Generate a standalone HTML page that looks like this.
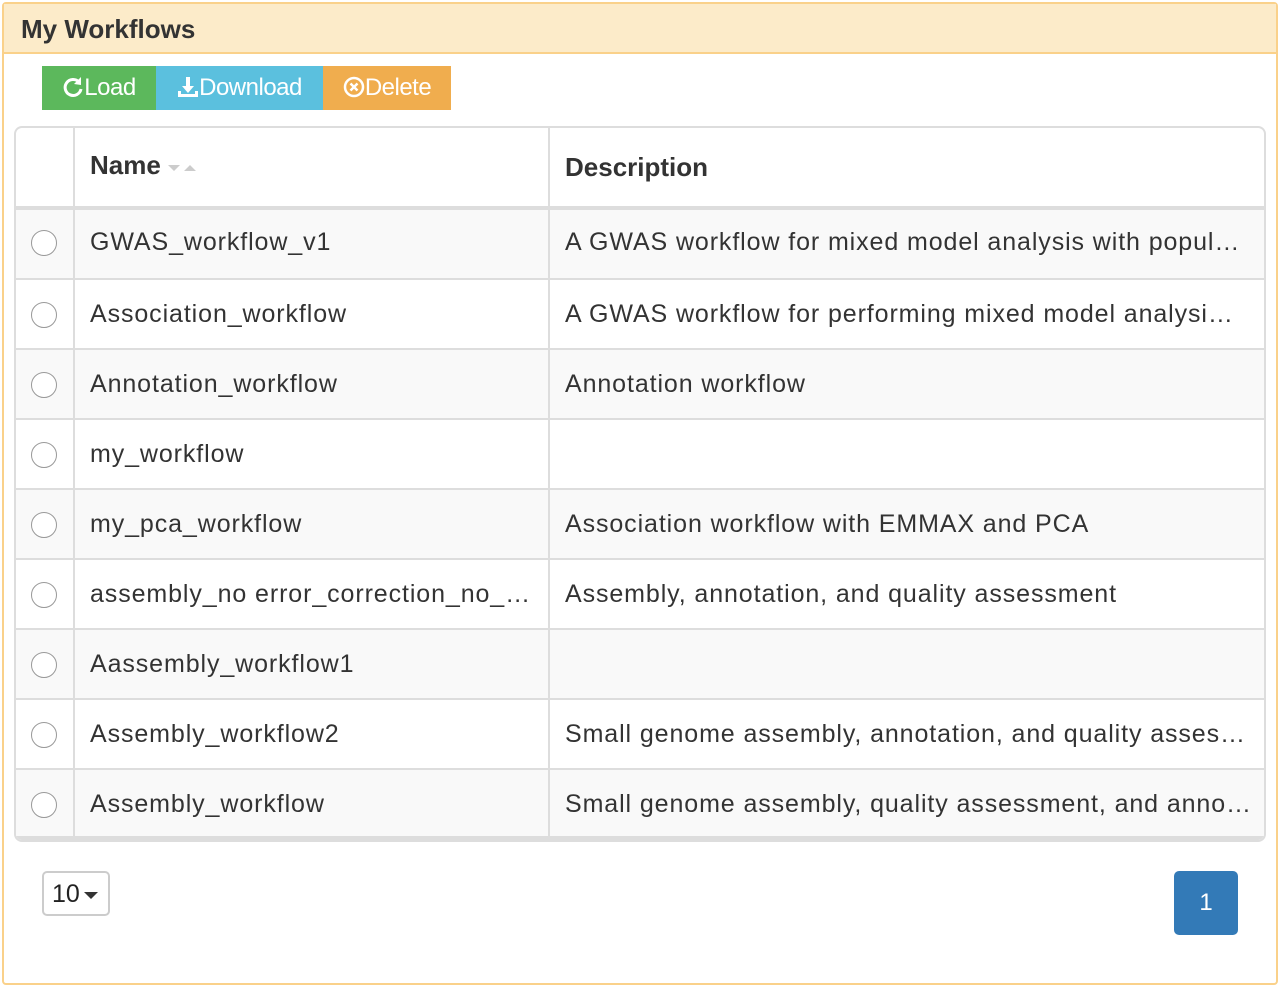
<!DOCTYPE html>
<html><head><meta charset="utf-8"><style>
*{box-sizing:border-box}
body{margin:0;width:1280px;height:986px;background:#fff;font-family:"Liberation Sans",Arial,sans-serif;color:#333;position:relative;overflow:hidden}
.panel{position:absolute;left:2px;top:2px;width:1276px;height:983px;border:2px solid #fad18a;border-radius:4px}
.head{position:absolute;left:0;top:0;right:0;height:50px;background:#fcebc9;border-bottom:2px solid #fad18a;font-weight:bold;font-size:26px;padding:10px 0 0 17px;color:#333}
.btn{position:absolute;top:62px;height:44px;color:#fff;font-size:24px;line-height:44px;text-align:center;letter-spacing:-0.5px}
.tbl{position:absolute;left:10px;top:122px;width:1252px;height:716px;border:2px solid #ddd;border-radius:8px;overflow:hidden}
.row{position:absolute;left:0;right:0;height:70px;border-top:2px solid #ddd;font-size:25px;letter-spacing:0.9px}
.row span{position:absolute;top:20px;white-space:nowrap}
.vl{position:absolute;top:0;bottom:0;width:2px;background:#ddd}
.rad{position:absolute;left:15px;top:22px;width:26px;height:26px;border:1.5px solid #999;border-radius:50%;background:#fff}
</style></head><body>
<div class="panel">
<div class="head">My Workflows</div>
<div class="btn" style="left:38px;width:114px;background:#5cb85c">
<svg width="22" height="22" viewBox="0 0 22 22" style="vertical-align:-3px"><path d="M17 6A8 8 0 1 0 19 13" fill="none" stroke="#fff" stroke-width="3"/><path d="M19 1L19 9L12 8Z" fill="#fff"/></svg>Load</div>
<div class="btn" style="left:152px;width:167px;background:#5bc0de">
<svg width="22" height="22" viewBox="0 0 22 22" style="vertical-align:-3px"><path d="M9 1h4v9h4l-6 7-6-7h4z M1 15v6h20v-6h-3v3H4v-3z" fill="#fff"/></svg>Download</div>
<div class="btn" style="left:319px;width:128px;background:#f0ad4e">
<svg width="22" height="22" viewBox="0 0 22 22" style="vertical-align:-3px"><circle cx="11" cy="11" r="9" fill="none" stroke="#fff" stroke-width="2.5"/><path d="M7.5 7.5l7 7M14.5 7.5l-7 7" stroke="#fff" stroke-width="2.5"/></svg>Delete</div>
<div class="tbl">
<div style="position:absolute;left:0;right:0;top:0;height:78px;font-weight:bold;font-size:26px">
<span style="position:absolute;left:74px;top:22px">Name <svg width="30" height="12" viewBox="0 0 30 12"><path d="M0 3h12l-6 6z M16 9h12l-6-6z" fill="#ccc"/></svg></span>
<span style="position:absolute;left:549px;top:24px">Description</span></div>
<div style="position:absolute;left:0;right:0;top:78px;height:4px;background:#ddd"></div>
<div style="position:absolute;left:0;right:0;top:82px">
<div class="row" style="top:0;background:#f9f9f9;border-top:none"><div class="rad" style="top:20px"></div><span style="left:74px;top:18px">GWAS_workflow_v1</span><span style="left:549px;top:18px">A GWAS workflow for mixed model analysis with popul…</span></div>
<div class="row" style="top:68px"><div class="rad"></div><span style="left:74px">Association_workflow</span><span style="left:549px">A GWAS workflow for performing mixed model analysi…</span></div>
<div class="row" style="top:138px;background:#f9f9f9"><div class="rad"></div><span style="left:74px">Annotation_workflow</span><span style="left:549px">Annotation workflow</span></div>
<div class="row" style="top:208px"><div class="rad"></div><span style="left:74px">my_workflow</span></div>
<div class="row" style="top:278px;background:#f9f9f9"><div class="rad"></div><span style="left:74px">my_pca_workflow</span><span style="left:549px">Association workflow with EMMAX and PCA</span></div>
<div class="row" style="top:348px"><div class="rad"></div><span style="left:74px">assembly_no error_correction_no_…</span><span style="left:549px">Assembly, annotation, and quality assessment</span></div>
<div class="row" style="top:418px;background:#f9f9f9"><div class="rad"></div><span style="left:74px">Aassembly_workflow1</span></div>
<div class="row" style="top:488px"><div class="rad"></div><span style="left:74px">Assembly_workflow2</span><span style="left:549px">Small genome assembly, annotation, and quality asses…</span></div>
<div class="row" style="top:558px;background:#f9f9f9"><div class="rad"></div><span style="left:74px">Assembly_workflow</span><span style="left:549px">Small genome assembly, quality assessment, and anno…</span></div>
</div>
<div class="vl" style="left:57px"></div><div class="vl" style="left:532px"></div>
<div style="position:absolute;left:0;right:0;bottom:0;height:4px;background:#ddd"></div>
</div>
<div style="position:absolute;left:38px;top:867px;width:68px;height:45px;border:2px solid #ccc;border-radius:5px;font-size:25px;padding:7px 0 0 8px;color:#222">10<svg width="14" height="10" viewBox="0 0 14 10" style="margin-left:4px;vertical-align:2px"><path d="M0 2h14l-7 7z" fill="#333"/></svg></div>
<div style="position:absolute;left:1170px;top:867px;width:64px;height:64px;background:#337ab7;border-radius:5px;color:#fff;font-size:24px;text-align:center;line-height:64px">1</div>
</div>
</body></html>
